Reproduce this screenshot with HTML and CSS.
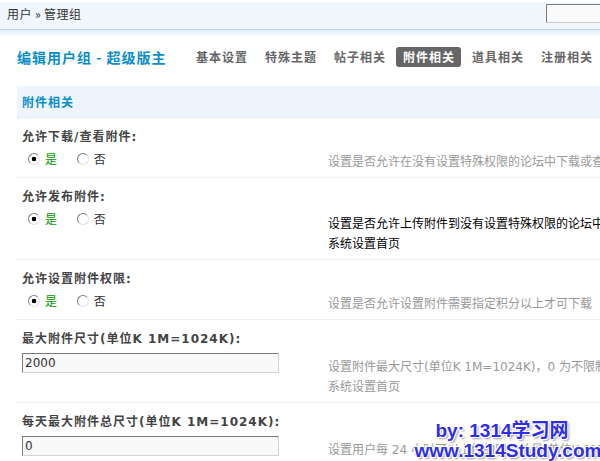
FILE: index.html
```html
<!DOCTYPE html>
<html lang="zh-CN">
<head>
    <meta charset="UTF-8">
    <title>编辑用户组 - 超级版主</title>
    <link rel="stylesheet" href="styles.css">
</head>
<body>
    <div class="topbar">
        <span class="crumb">用户 &raquo; 管理组</span>
        <input class="search" type="text">
    </div>
    <div class="topshade"></div>

    <div class="main">
        <div class="titlebar">
            <h3>编辑用户组 - 超级版主</h3>
            <ul class="tabs">
                <li>基本设置</li>
                <li>特殊主题</li>
                <li>帖子相关</li>
                <li class="current">附件相关</li>
                <li>道具相关</li>
                <li>注册相关</li>
            </ul>
        </div>

        <div class="section-head">附件相关</div>

        <div class="item">
            <div class="item-label">允许下载/查看附件:</div>
            <div class="item-body">
                <div class="item-form">
                    <label class="opt"><input type="radio" name="r1" checked> <span class="yes">是</span></label>
                    <label class="opt"><input type="radio" name="r1"> <span>否</span></label>
                </div>
                <div class="item-tips">设置是否允许在没有设置特殊权限的论坛中下载或查看附件</div>
            </div>
        </div>

        <div class="item hover">
            <div class="item-label">允许发布附件:</div>
            <div class="item-body">
                <div class="item-form">
                    <label class="opt"><input type="radio" name="r2" checked> <span class="yes">是</span></label>
                    <label class="opt"><input type="radio" name="r2"> <span>否</span></label>
                </div>
                <div class="item-tips">设置是否允许上传附件到没有设置特殊权限的论坛中，附件的相关设置请到<br>系统设置首页</div>
            </div>
        </div>

        <div class="item">
            <div class="item-label">允许设置附件权限:</div>
            <div class="item-body">
                <div class="item-form">
                    <label class="opt"><input type="radio" name="r3" checked> <span class="yes">是</span></label>
                    <label class="opt"><input type="radio" name="r3"> <span>否</span></label>
                </div>
                <div class="item-tips">设置是否允许设置附件需要指定积分以上才可下载</div>
            </div>
        </div>

        <div class="item">
            <div class="item-label">最大附件尺寸(单位K 1M=1024K):</div>
            <div class="item-body">
                <div class="item-form">
                    <input class="txt" type="text" value="2000">
                </div>
                <div class="item-tips tips-input">设置附件最大尺寸(单位K 1M=1024K)，0 为不限制，附件的相关设置请到<br>系统设置首页</div>
            </div>
        </div>

        <div class="item">
            <div class="item-label">每天最大附件总尺寸(单位K 1M=1024K):</div>
            <div class="item-body">
                <div class="item-form">
                    <input class="txt" type="text" value="0">
                </div>
                <div class="item-tips tips-input">设置用户每 24 小时可以上传的附件总量(单位K 1M=1024K)，0 为不限制</div>
            </div>
        </div>
    </div>

    <div class="watermark">
        <div class="wm-by">by: 1314学习网</div>
        <div>www.1314Study.com</div>
    </div>
</body>
</html>
```

FILE: styles.css
```css
html, body {
    overflow: hidden;
}
body {
    margin: 0;
    font-family: "DejaVu Sans", "Noto Sans CJK SC", sans-serif;
    font-size: 12px;
    color: #333;
    background-color: #fff;
    position: relative;
    height: 461px;
}
.topbar {
    height: 27px;
    margin-top: 2px;
    background-color: #eff7fc;
    border-bottom: 1px solid #b9d0e1;
    display: flex;
    align-items: center;
    justify-content: space-between;
    padding-left: 7px;
    width: 671px;
}
.crumb {
    font-family: "Noto Sans CJK SC", sans-serif;
    line-height: 16px;
    letter-spacing: 0.4px;
    margin-top: -4px;
}
.search {
    width: 130px;
    height: 17px;
    margin-top: -5px;
    border: 1px solid #7a7a7a;
    border-right-color: #ccc;
    border-bottom-color: #ccc;
    background-color: #fafafa;
    padding: 0;
}
.topshade {
    height: 8px;
    background: linear-gradient(#e3eef8, #fff);
}
.main {
    padding-left: 17px;
    width: 880px;
}
.titlebar {
    display: flex;
    align-items: center;
    padding-top: 9px;
}
.titlebar h3 {
    margin: 0;
    font-size: 14px;
    line-height: 20px;
    letter-spacing: 1px;
    color: #0a8ec6;
    font-family: "Noto Sans CJK SC", sans-serif;
    width: 172px;
}
.tabs {
    list-style: none;
    margin: 0;
    padding: 0;
    display: flex;
    gap: 4px;
}
.tabs li {
    font-family: "Noto Sans CJK SC", sans-serif;
    font-weight: bold;
    letter-spacing: 1px;
    line-height: 20px;
    padding: 0 6px 0 7px;
    color: #666;
    border-radius: 3px;
}
.tabs li.current {
    background-color: #666;
    color: #fff;
}
.section-head {
    margin-top: 19px;
    height: 31px;
    line-height: 31px;
    padding-left: 5px;
    background-color: #eff5fd;
    border-bottom: 1px dotted #d5e6f4;
    color: #0a8ec6;
    font-weight: bold;
    letter-spacing: 1px;
    font-family: "Noto Sans CJK SC", sans-serif;
}
.item {
    border-bottom: 1px dotted #d5e6f4;
}
.item-label {
    padding: 10px 5px 0;
    line-height: 18px;
    font-weight: bold;
    letter-spacing: 1px;
    color: #444;
}
.item-body {
    display: flex;
    padding: 3px 0 5px;
}
.item-form {
    width: 306px;
    padding-left: 5px;
    flex-shrink: 0;
}
.item-tips {
    padding-top: 3px;
    line-height: 20px;
    color: #999;
    white-space: nowrap;
}
.tips-input {
    padding-top: 6px;
}
.hover .item-tips {
    color: #000;
    padding-top: 5px;
}
.opt {
    display: inline-flex;
    align-items: center;
    line-height: 20px;
    margin-left: 6px;
    margin-right: 10px;
    font-family: "Noto Sans CJK SC", sans-serif;
}
.opt span {
    margin-left: 5px;
}
.opt .yes {
    color: #090;
}
input[type="radio"] {
    appearance: none;
    -webkit-appearance: none;
    margin: 0;
    width: 12px;
    height: 12px;
    border: 1px solid #808080;
    border-right-color: #e2e2e2;
    border-bottom-color: #e2e2e2;
    border-radius: 50%;
    background-color: #fff;
}
input[type="radio"]:checked {
    background: radial-gradient(circle, #000 0 2px, #fff 2.6px);
}
.txt {
    margin-top: 2px;
    width: 251px;
    height: 18px;
    padding: 0 2px;
    border: 1px solid #7a7a7a;
    border-right-color: #d4d4d4;
    border-bottom-color: #d4d4d4;
    background-color: #f9f9f9;
    font-family: "DejaVu Sans", sans-serif;
    font-size: 12px;
    color: #333;
}
.watermark {
    position: absolute;
    left: 414px;
    top: 421px;
    width: 188px;
    text-align: center;
    font-family: "Liberation Sans", "Noto Sans CJK SC", sans-serif;
    font-weight: bold;
    font-size: 19px;
    line-height: 20px;
    color: #2e2ee8;
    text-shadow: 1px 1px 0 #fff, -1px -1px 0 #fff, 1px -1px 0 #fff, -1px 1px 0 #fff, 2px 2px 2px #99a;
}
.wm-by {
    padding-right: 12px;
}
```
